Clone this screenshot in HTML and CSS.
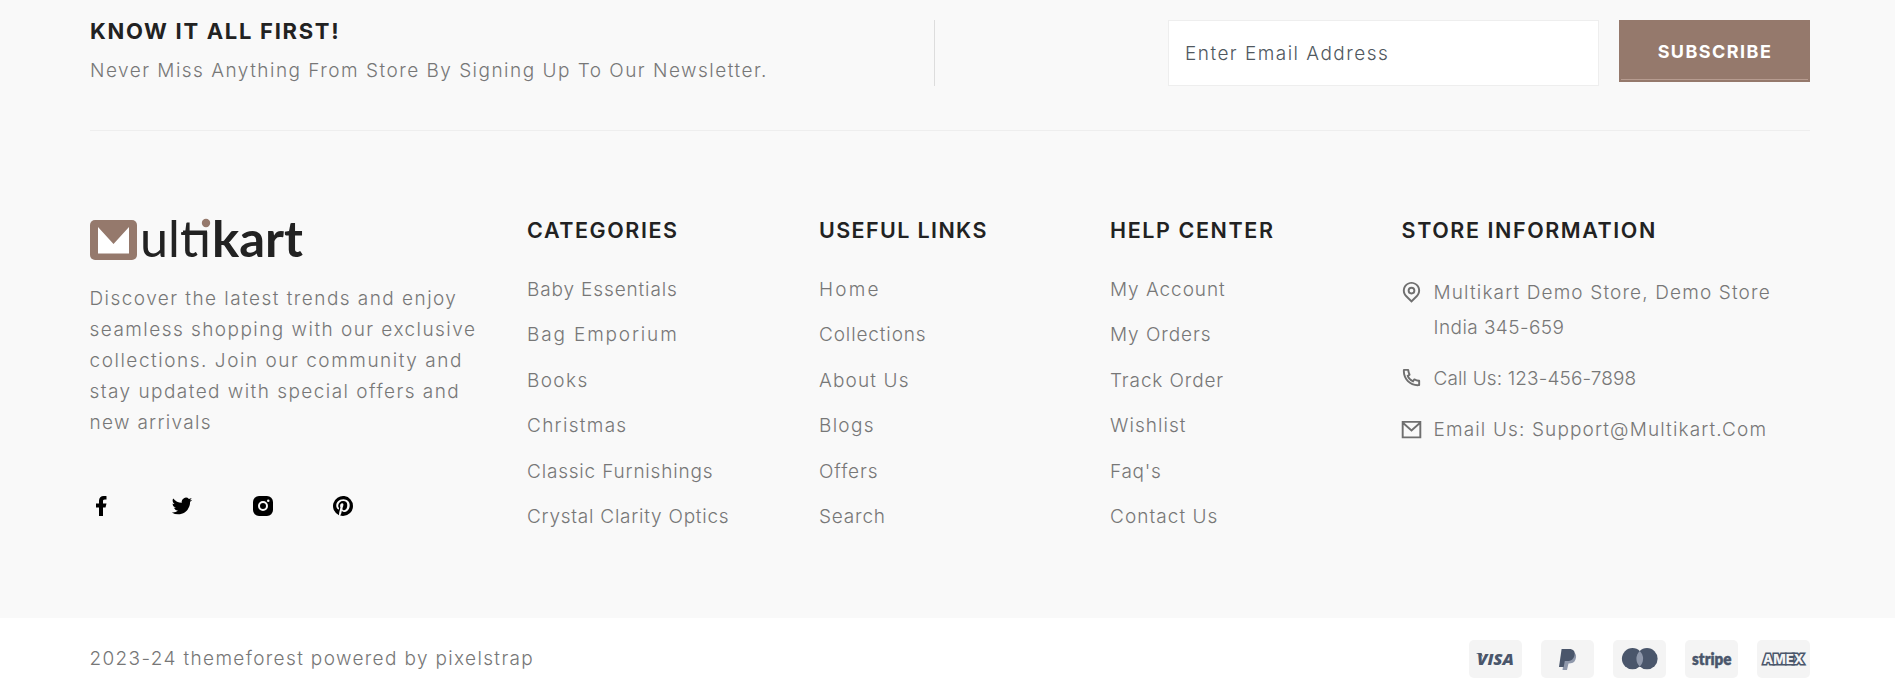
FILE: index.html
```html
<!DOCTYPE html>
<html lang="en">
<head>
<meta charset="utf-8">
<title>Multikart</title>
<link rel="stylesheet" href="styles.css">
</head>
<body>
<footer class="footer">
  <section class="newsletter container">
    <div class="newsletter-intro">
      <h4 class="newsletter-title">KNOW IT ALL FIRST!</h4>
      <p class="newsletter-text">Never Miss Anything From Store By Signing Up To Our Newsletter.</p>
    </div>
    <form class="subscribe">
      <input class="subscribe-input" type="text" placeholder="Enter Email Address">
      <button class="subscribe-button" type="button">SUBSCRIBE</button>
    </form>
  </section>

  <section class="columns container">
    <div class="about">
      <svg class="logo" width="216" height="44" viewBox="0 0 216 44">
        <rect x="0" y="2" width="47" height="40" rx="5" fill="#95796c"/>
        <path d="M8 9 23.5 26 39 9V35.5H8z" fill="#fff"/>
        <text class="logo-thin" x="50" y="38.5" textLength="71" lengthAdjust="spacingAndGlyphs">ultı</text>
        <path d="M93 12.500h24v2.800h-24z" fill="#222"/>
        <circle cx="116" cy="5" r="4.200" fill="#95796c"/>
        <text class="logo-bold" x="122" y="38.500" textLength="91" lengthAdjust="spacingAndGlyphs">kart</text>
      </svg>
      <p class="about-text">
        <span class="ls-145">Discover the latest trends and enjoy</span><br>
        <span class="ls-145">seamless shopping with our exclusive</span><br>
        <span class="ls-153">collections. Join our community and</span><br>
        <span class="ls-145">stay updated with special offers and</span><br>
        <span class="ls-130">new arrivals</span>
      </p>
      <div class="social">
        <svg viewBox="0 0 24 24"><path d="M14 13.5h2.5l1-4H14v-2c0-1.030 0-2 2-2h1.500V2.140c-.326-.043-1.557-.140-2.857-.140C11.928 2 10 3.657 10 6.700v2.800H7v4h3V22h4v-8.500z"/></svg>
        <svg viewBox="0 0 24 24"><path d="M22.162 5.656a8.384 8.384 0 0 1-2.402.658A4.196 4.196 0 0 0 21.600 4c-.820.488-1.719.830-2.656 1.015a4.182 4.182 0 0 0-7.126 3.814 11.874 11.874 0 0 1-8.620-4.370 4.168 4.168 0 0 0-.566 2.103c0 1.450.738 2.731 1.860 3.481a4.168 4.168 0 0 1-1.894-.523v.052a4.185 4.185 0 0 0 3.355 4.101 4.210 4.210 0 0 1-1.890.072A4.185 4.185 0 0 0 7.970 16.650a8.394 8.394 0 0 1-6.191 1.732 11.830 11.830 0 0 0 6.410 1.880c7.693 0 11.900-6.373 11.900-11.900 0-.180-.005-.362-.013-.540a8.496 8.496 0 0 0 2.087-2.165z"/></svg>
        <svg viewBox="0 0 24 24"><path fill-rule="evenodd" d="M8 2h8a6 6 0 0 1 6 6v8a6 6 0 0 1-6 6H8a6 6 0 0 1-6-6V8a6 6 0 0 1 6-6zm4 5a5 5 0 1 0 0 10 5 5 0 0 0 0-10zm0 2a3 3 0 1 1 0 6 3 3 0 0 1 0-6zm5.250-3.500a1.250 1.250 0 1 0 0 2.500 1.250 1.250 0 0 0 0-2.500z"/></svg>
        <svg viewBox="0 0 24 24"><path d="M13.370 2.094A10.003 10.003 0 0 0 8.002 21.170a7.757 7.757 0 0 1 .163-2.293c.185-.839 1.296-5.463 1.296-5.463a3.739 3.739 0 0 1-.324-1.577c0-1.485.857-2.593 1.923-2.593a1.334 1.334 0 0 1 1.342 1.508c0 .9-.578 2.262-.880 3.540a1.544 1.544 0 0 0 1.575 1.923c1.898 0 3.170-2.431 3.170-5.301 0-2.200-1.457-3.848-4.143-3.848a4.746 4.746 0 0 0-4.930 4.794 2.960 2.960 0 0 0 .648 1.970.480.480 0 0 1 .162.554c-.046.184-.162.623-.208.784a.354.354 0 0 1-.510.254c-1.384-.554-2.036-2.077-2.036-3.816 0-2.847 2.384-6.255 7.154-6.255 3.796 0 6.320 2.777 6.320 5.747 0 3.909-2.177 6.848-5.394 6.848a2.861 2.861 0 0 1-2.454-1.246s-.578 2.316-.692 2.754a8.026 8.026 0 0 1-1.019 2.131c.923.280 1.882.420 2.846.416a9.988 9.988 0 0 0 9.996-10.003 10.002 10.002 0 0 0-8.635-9.903z"/></svg>
      </div>
    </div>

    <nav>
      <h5 class="heading ls-157">CATEGORIES</h5>
      <ul class="links">
        <li class="ls-87">Baby Essentials</li>
        <li class="ls-185">Bag Emporium</li>
        <li class="ls-138">Books</li>
        <li class="ls-130">Christmas</li>
        <li class="ls-81">Classic Furnishings</li>
        <li class="ls-75">Crystal Clarity Optics</li>
      </ul>
    </nav>
    <nav>
      <h5 class="heading ls-138">USEFUL LINKS</h5>
      <ul class="links">
        <li class="ls-220">Home</li>
        <li class="ls-87">Collections</li>
        <li class="ls-114">About Us</li>
        <li class="ls-130">Blogs</li>
        <li class="ls-87">Offers</li>
        <li class="ls-81">Search</li>
      </ul>
    </nav>
    <nav>
      <h5 class="heading ls-161">HELP CENTER</h5>
      <ul class="links">
        <li class="ls-94">My Account</li>
        <li class="ls-94">My Orders</li>
        <li class="ls-87">Track Order</li>
        <li class="ls-105">Wishlist</li>
        <li class="ls-71">Faq's</li>
        <li class="ls-105">Contact Us</li>
      </ul>
    </nav>
    <div>
      <h5 class="heading heading-store ls-157">STORE INFORMATION</h5>
      <ul class="contact">
        <li>
          <svg viewBox="0 0 24 24"><path d="M12 20.900 16.950 15.950C19.683 13.216 19.683 8.784 16.950 6.050 14.216 3.317 9.784 3.317 7.050 6.050 4.317 8.784 4.317 13.216 7.050 15.950L12 20.900ZM12 23.728 5.636 17.364C2.121 13.849 2.121 8.151 5.636 4.636 9.151 1.121 14.849 1.121 18.364 4.636 21.879 8.151 21.879 13.849 18.364 17.364L12 23.728ZM12 13a2 2 0 1 0 0-4 2 2 0 0 0 0 4Zm0 2a4 4 0 1 1 0-8 4 4 0 0 1 0 8Z"/></svg>
          <div><span class="ls-114">Multikart Demo Store, Demo Store</span><br><span class="ls-43">India 345-659</span></div>
        </li>
        <li>
          <svg viewBox="0 0 24 24"><path d="M9.366 10.682C10.302 12.329 11.671 13.698 13.318 14.634L14.202 13.396C14.496 12.985 15.052 12.857 15.496 13.100 16.902 13.868 18.457 14.335 20.079 14.464 20.599 14.505 21 14.939 21 15.461V19.923C21 20.436 20.612 20.866 20.102 20.918 19.572 20.973 19.038 21 18.500 21 9.940 21 3 14.060 3 5.500 3 4.962 3.027 4.428 3.082 3.898 3.134 3.388 3.564 3 4.077 3H8.539C9.061 3 9.495 3.401 9.536 3.921 9.665 5.543 10.132 7.098 10.900 8.504 11.143 8.948 11.016 9.504 10.604 9.798L9.366 10.682ZM6.844 10.025 8.744 8.668C8.205 7.505 7.836 6.272 7.647 5H5.009C5.003 5.166 5 5.333 5 5.500 5 12.956 11.044 19 18.500 19 18.667 19 18.834 18.997 19 18.991V16.353C17.728 16.164 16.495 15.795 15.332 15.256L13.975 17.156C13.426 16.943 12.896 16.692 12.387 16.406 10.370 15.259 8.741 13.630 7.594 11.613 7.308 11.104 7.058 10.574 6.844 10.025Z"/></svg>
          <div class="ls-13">Call Us: 123-456-7898</div>
        </li>
        <li>
          <svg class="outline" viewBox="0 0 24 24"><path d="M2.800 4h18.400v16.200H2.800zM3 5l9 8 9-8"/></svg>
          <div class="ls-114">Email Us: Support@Multikart.Com</div>
        </li>
      </ul>
    </div>
  </section>

  <section class="bottom">
    <div class="bottom-inner container">
      <p class="copyright">2023-24 themeforest powered by pixelstrap</p>
      <div class="payments">
        <svg class="card" viewBox="0 0 53 38"><text class="visa" x="8" y="25" textLength="37" lengthAdjust="spacingAndGlyphs">VISA</text><path class="ink" d="M7.500 13h5l1.500 4c-1.500-2-3.500-3-6.500-3.500z"/></svg>
        <svg class="card" viewBox="0 0 53 38"><path class="soft" d="M24 12h8c3 1 3.800 4 2.500 7.500-1 3-3.500 4-7 4L26 30h-4.500z"/><path class="ink" d="M20.600 9h7.500c4.500 0 6.200 2.400 5.400 6.200-.8 4-3.300 5.800-7.200 5.800h-2.500l-1.100 6h-4.700z"/></svg>
        <svg class="card" viewBox="0 0 53 38"><circle class="ink" cx="19.500" cy="18.700" r="10.600"/><circle class="ink" cx="34" cy="18.700" r="10.600"/><path class="soft" d="M26.750 11a10.600 10.600 0 0 1 0 15.400 10.600 10.600 0 0 1 0-15.400z"/></svg>
        <svg class="card" viewBox="0 0 53 38"><text class="stripe" x="7" y="24.500" textLength="39.500" lengthAdjust="spacingAndGlyphs">stripe</text></svg>
        <svg class="card" viewBox="0 0 53 38"><text class="amex" x="6" y="23.500" textLength="41" lengthAdjust="spacingAndGlyphs">AMEX</text></svg>
      </div>
    </div>
  </section>
</footer>
</body>
</html>
```

FILE: styles.css
```css
* { box-sizing: border-box; margin: 0; padding: 0; }

body {
  background: #f9f9f9;
  color: #777;
  font: 300 19px/31px Inter, "Open Sans", sans-serif;
  overflow: hidden;
}

.footer { height: 699px; display: flex; flex-direction: column; }
.container { width: 1720px; margin: 0 auto 0 90px; }

.newsletter {
  margin-top: 20px;
  height: 111px;
  display: flex;
  justify-content: space-between;
  align-items: flex-start;
  border-bottom: 1px solid #eee;
}
.newsletter-intro { width: 845px; height: 66px; border-right: 1px solid #ddd; }
.newsletter-title { color: #222; font-weight: 700; font-size: 22px; line-height: 22px; letter-spacing: 1.7px; }
.newsletter-text { margin-top: 13px; letter-spacing: 1.48px; white-space: nowrap; }

.subscribe { display: flex; align-items: flex-start; gap: 20px; }
.subscribe-input {
  width: 431px;
  height: 66px;
  padding: 0 16px;
  border: 1px solid #eee;
  background: #fff;
  font: 300 19px Inter, sans-serif;
  letter-spacing: 1.46px;
}
.subscribe-input::placeholder { color: #505860; opacity: 1; }
.subscribe-button {
  width: 191px;
  height: 62px;
  padding: 1px 0 0 1px;
  border: 0;
  background: linear-gradient(#b79c90, #b79c90) 50% 59px / 187px 1px no-repeat #95796c;
  color: #fff;
  font: 700 18px Inter, sans-serif;
  letter-spacing: 1.45px;
}

.columns { flex: 1; padding-top: 86px; display: grid; grid-template-columns: 437px 292px 291px 291px 1fr; }

.logo { display: block; margin-top: 1px; overflow: visible; }
.logo-thin { font: 400 50px Lato, sans-serif; fill: #222; }
.logo-bold { font: 700 50px Lato, sans-serif; fill: #222; }
.about-text { margin: 21px 0 0 -.5px; white-space: nowrap; }
.social { display: flex; gap: 56.600px; margin: 56px 0 0 -.6px; }
.social svg { width: 24px; height: 24px; fill: #000; }

.heading { color: #222; font-weight: 600; font-size: 21.500px; line-height: 26px; white-space: nowrap; }
.heading-store { padding-left: .6px; }
.links { list-style: none; margin-top: 24px; line-height: 45.400px; white-space: nowrap; }

.contact { list-style: none; margin-top: 31.600px; display: grid; gap: 16px; line-height: 35px; white-space: nowrap; }
.contact li { display: flex; gap: 11px; }
.contact svg { width: 23px; height: 23px; margin: 5px 0 0 -1.500px; fill: #6f6f6f; }
.contact .outline { fill: none; stroke: #6f6f6f; stroke-width: 2; margin-top: 6px; }

.bottom { height: 81px; background: #fff; }
.bottom-inner { height: 81px; display: flex; justify-content: space-between; align-items: center; }
.copyright { margin-left: -.5px; letter-spacing: 1.350px; }
.payments { display: flex; gap: 19px; }
.card { width: 53px; height: 38px; border-radius: 5px; background: #f4f4f4; }
.ink { fill: #4a566b; }
.soft { fill: #8f98ab; }
.visa { font: italic 800 16px "Open Sans", sans-serif; fill: #4a566b; }
.stripe { font: 800 17px Lato, sans-serif; fill: #4a566b; stroke: #4a566b; stroke-width: .4px; }
.amex { font: 800 12.500px Inter, sans-serif; fill: #f4f4f4; stroke: #4a566b; stroke-width: 3px; paint-order: stroke; }

.ls-13 { letter-spacing: .13px; }
.ls-43 { letter-spacing: .43px; }
.ls-71 { letter-spacing: .71px; }
.ls-75 { letter-spacing: .75px; }
.ls-81 { letter-spacing: .81px; }
.ls-87 { letter-spacing: .87px; }
.ls-94 { letter-spacing: .94px; }
.ls-105 { letter-spacing: 1.05px; }
.ls-114 { letter-spacing: 1.14px; }
.ls-130 { letter-spacing: 1.3px; }
.ls-138 { letter-spacing: 1.38px; }
.ls-145 { letter-spacing: 1.45px; }
.ls-153 { letter-spacing: 1.53px; }
.ls-157 { letter-spacing: 1.57px; }
.ls-161 { letter-spacing: 1.61px; }
.ls-185 { letter-spacing: 1.85px; }
.ls-220 { letter-spacing: 2.2px; }
```
